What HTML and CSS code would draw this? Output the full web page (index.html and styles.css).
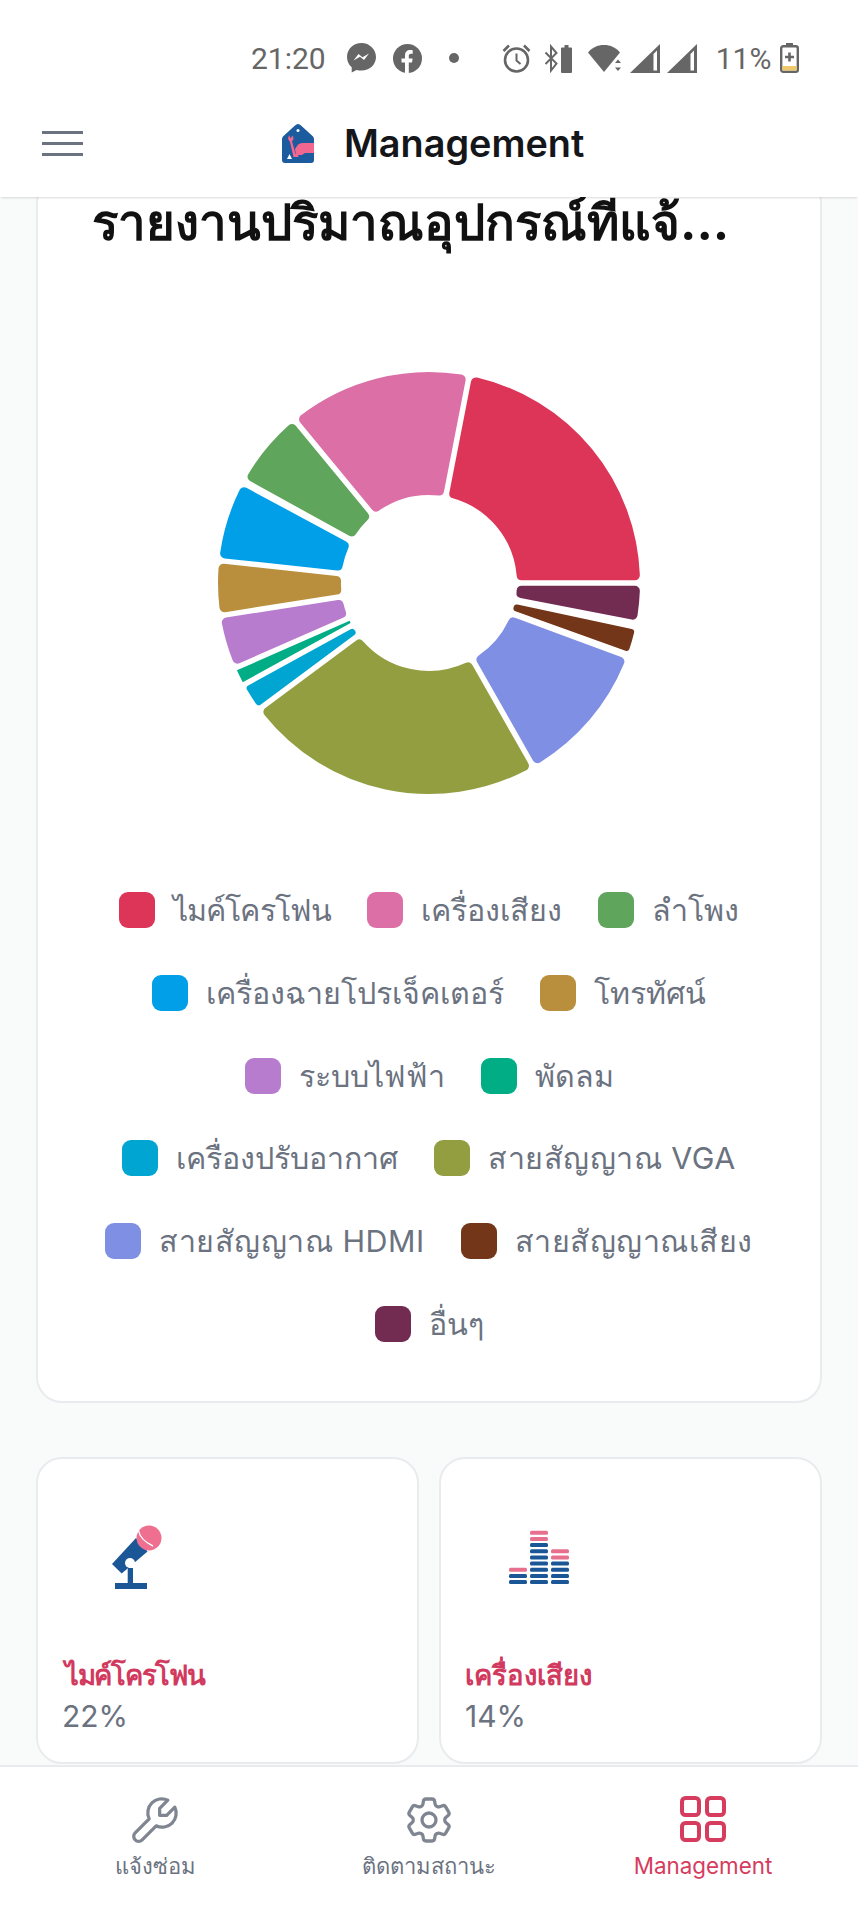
FILE: index.html
```html
<!DOCTYPE html>
<html lang="th">
<head>
    <meta charset="UTF-8">
    <meta name="viewport" content="width=device-width, initial-scale=1.0">
    <title>Management</title>
    <link rel="stylesheet" href="styles.css">
</head>
<body>
    <div class="status-bar">
        <span class="status-time">21:20</span>
        <svg class="ic-messenger" width="29" height="30" viewBox="0 0 29 30"><path d="M14.5 0C6.5 0 0 6 0 14c0 4.200 1.800 7.800 4.700 10.300V29.500l4.900-2.600c1.500.5 3.200.7 4.900.7 8 0 14.500-6 14.500-13.600S22.500 0 14.500 0z" fill="#666"/><path d="M6.500 17.500l5-6.500 4 3.200 6.500-3.700-5 6.500-4-3.200z" fill="#fff"/></svg>
        <svg class="ic-facebook" width="29" height="29" viewBox="0 0 29 29"><circle cx="14.500" cy="14.500" r="14.500" fill="#666"/><path d="M12 29V18.500H8.500v-4H12v-3c0-3.500 2.100-5.400 5.200-5.400 1.200 0 2.500.2 2.500.2v3.400H18c-1.700 0-2.200 1-2.200 2.100v2.700h3.800l-.6 4h-3.200V29z" fill="#fff"/></svg>
        <span class="status-dot"></span>
        <svg class="ic-alarm" width="29" height="30" viewBox="0 0 29 30" fill="none" stroke="#666"><circle cx="14.500" cy="17" r="11.500" stroke-width="2.600"/><path d="M14.500 10.500V17.500l4 3.500" stroke-width="2"/><path d="M1.500 8L7 2.500M27.500 8L22 2.500" stroke-width="2.600"/></svg>
        <svg class="ic-bluetooth" width="28" height="29" viewBox="0 0 28 29"><path d="M1.500 8.500l11 11-5.500 7V2.500l5.500 6.500-11 11" fill="none" stroke="#666" stroke-width="2"/><path d="M18 3.500h2.500V1h4v2.500H27a1 1 0 0 1 1 1V28a1 1 0 0 1-1 1h-9a1 1 0 0 1-1-1V4.500a1 1 0 0 1 1-1z" fill="#666"/></svg>
        <svg class="ic-wifi" width="34" height="28" viewBox="0 0 34 28"><path d="M0 8.500C4 3.500 9.500 1 16 1s12 2.500 16 7.500L16 28z" fill="#666"/><path d="M30 15.500l3 3.500h-6zM30 27l3-3.500h-6z" fill="#666"/></svg>
        <svg class="ic-signal" width="30" height="29" viewBox="0 0 30 29"><path d="M0 29L30 0v29z" fill="#666"/><path d="M23.500 26.500V10l3.500-3.500v20z" fill="#fff"/></svg>
        <svg class="ic-signal2" width="30" height="29" viewBox="0 0 30 29"><path d="M0 29L30 0v29z" fill="#666"/><path d="M23.500 26.500V10l3.500-3.500v20z" fill="#fff"/></svg>
        <span class="status-batt">11%</span>
        <svg class="ic-battery" width="19" height="30" viewBox="0 0 19 30"><path d="M6 0h7v3H6z" fill="#666"/><rect x="1.200" y="3.200" width="16.600" height="25.600" rx="2" fill="#fff" stroke="#666" stroke-width="2.400"/><path d="M2.400 23h14.200v4.600H2.400z" fill="#edc96c"/><path d="M8.200 9.500h2.600v3.200H14v2.600h-3.200v3.200H8.200v-3.200H5v-2.600h3.200z" fill="#666"/></svg>
    </div>

    <header class="topbar">
        <button class="menu-btn" aria-label="menu"><span></span><span></span><span></span></button>
        <div class="brand">
            <svg width="32" height="39" viewBox="0 0 32 39">
                <path d="M16 0c1 0 2 .5 3 1.500L30.500 12c1 1 1.500 2 1.500 3.500V36c0 2-1 3-3 3H3c-2 0-3-1-3-3V15.500C0 14 .5 13 1.500 12L13 1.500C14 .5 15 0 16 0z" fill="#1b5b9e"/>
                <circle cx="16" cy="6.500" r="1.500" fill="#fff"/>
                <path d="M32 19H21c-3 0-5 1-6 3l-2 3 1 6h6l3-2h9z" fill="#f3668f"/>
                <path d="M7 11l1.500 3L11 11.500l.5 4-1.500 1.500 3.500 13h2.500l.5 3h-5L8 18 6 15z" fill="#f3668f"/>
                <path d="M5 35l2.500-5 2.500 5z" fill="#fff"/>
            </svg>
            <span class="brand-name">Management</span>
        </div>
    </header>

    <main class="content">
        <section class="card chart-card">
            <h1 class="chart-title">รายงานปริมาณอุปกรณ์ที่แจ้...</h1>
            <svg id="donut" class="donut" width="440" height="440" viewBox="-220 -220 440 440"></svg>
            <div class="legend">
                <div class="legend-row">
                    <div class="legend-item"><i class="swatch c-red"></i><span class="tight">ไมค์โครโฟน</span></div>
                    <div class="legend-item"><i class="swatch c-pink"></i>เครื่องเสียง</div>
                    <div class="legend-item"><i class="swatch c-green"></i>ลำโพง</div>
                </div>
                <div class="legend-row">
                    <div class="legend-item"><i class="swatch c-blue"></i>เครื่องฉายโปรเจ็คเตอร์</div>
                    <div class="legend-item"><i class="swatch c-tan"></i>โทรทัศน์</div>
                </div>
                <div class="legend-row">
                    <div class="legend-item"><i class="swatch c-purple"></i>ระบบไฟฟ้า</div>
                    <div class="legend-item"><i class="swatch c-teal"></i>พัดลม</div>
                </div>
                <div class="legend-row">
                    <div class="legend-item"><i class="swatch c-cyan"></i>เครื่องปรับอากาศ</div>
                    <div class="legend-item"><i class="swatch c-olive"></i><span class="wide">สายสัญญาณ VGA</span></div>
                </div>
                <div class="legend-row">
                    <div class="legend-item"><i class="swatch c-peri"></i><span class="wide">สายสัญญาณ HDMI</span></div>
                    <div class="legend-item"><i class="swatch c-brown"></i><span class="wide">สายสัญญาณเสียง</span></div>
                </div>
                <div class="legend-row">
                    <div class="legend-item"><i class="swatch c-maroon"></i>อื่นๆ</div>
                </div>
            </div>
        </section>

        <div class="stat-grid">
            <section class="card stat-card">
                <svg class="stat-icon" width="110" height="100" viewBox="0 0 110 100">
                    <path d="M74 28L85.500 41.500 59.700 63.500 50 54z" fill="#1b5696"/>
                    <circle cx="68" cy="53" r="5" fill="#fff"/>
                    <path d="M65.700 58h5.300v15h-5.300zM53 73h32v6H53z" fill="#1b5696"/>
                    <circle cx="87" cy="28" r="12.500" fill="#ee6f8f"/>
                    <path d="M76.500 20.500c1 6 7 12 14.500 15.500" fill="none" stroke="#fff" stroke-width="1.400"/>
                </svg>
                <div class="stat-name"><span class="tight-lg">ไมค์โครโฟน</span></div>
                <div class="stat-value">22%</div>
            </section>
            <section class="card stat-card">
                <svg class="stat-icon" width="110" height="100" viewBox="0 0 110 100">
                    <g fill="#e8708f">
                        <rect x="65" y="20.700" width="18" height="4" rx="1.500"/>
                        <rect x="65" y="26.900" width="18" height="4" rx="1.500"/>
                        <rect x="86" y="39.200" width="18" height="4" rx="1.500"/>
                        <rect x="86" y="45.400" width="18" height="4" rx="1.500"/>
                        <rect x="44" y="57.700" width="18" height="4" rx="1.500"/>
                    </g>
                    <g fill="#1b5696">
                        <rect x="65" y="33" width="18" height="4" rx="1.500"/>
                        <rect x="65" y="39.200" width="18" height="4" rx="1.500"/>
                        <rect x="65" y="45.400" width="18" height="4" rx="1.500"/>
                        <rect x="65" y="51.500" width="18" height="4" rx="1.500"/>
                        <rect x="65" y="57.700" width="18" height="4" rx="1.500"/>
                        <rect x="65" y="63.900" width="18" height="4" rx="1.500"/>
                        <rect x="65" y="70" width="18" height="4" rx="1.500"/>
                        <rect x="86" y="51.500" width="18" height="4" rx="1.500"/>
                        <rect x="86" y="57.700" width="18" height="4" rx="1.500"/>
                        <rect x="86" y="63.900" width="18" height="4" rx="1.500"/>
                        <rect x="86" y="70" width="18" height="4" rx="1.500"/>
                        <rect x="44" y="63.900" width="18" height="4" rx="1.500"/>
                        <rect x="44" y="70" width="18" height="4" rx="1.500"/>
                    </g>
                </svg>
                <div class="stat-name">เครื่องเสียง</div>
                <div class="stat-value">14%</div>
            </section>
        </div>
    </main>

    <nav class="bottom-nav">
        <a class="nav-item">
            <svg class="nav-ic" width="56" height="56" viewBox="0 0 24 24" fill="none" stroke="currentColor" stroke-width="1.400" stroke-linecap="round" stroke-linejoin="round"><path transform="translate(24 0) scale(-1 1)" d="M7 10h3v-3l-3.500-3.500a6 6 0 0 1 8 8l6 6a2 2 0 0 1-3 3l-6-6a6 6 0 0 1-8-8l3.500 3.500"/></svg>
            <span>แจ้งซ่อม</span>
        </a>
        <a class="nav-item">
            <svg class="nav-ic" width="56" height="56" viewBox="0 0 24 24" fill="none" stroke="currentColor" stroke-width="1.400" stroke-linecap="round" stroke-linejoin="round"><path d="M9.594 3.940c.09-.542.56-.94 1.110-.94h2.593c.55 0 1.020.398 1.110.94l.213 1.281c.063.374.313.686.645.87.074.04.147.083.22.127.325.196.72.257 1.075.124l1.217-.456a1.125 1.125 0 0 1 1.370.49l1.296 2.247a1.125 1.125 0 0 1-.26 1.431l-1.003.827c-.293.241-.438.613-.43.992a7.723 7.723 0 0 1 0 .255c-.008.378.137.75.43.991l1.004.827c.424.35.534.955.26 1.430l-1.298 2.247a1.125 1.125 0 0 1-1.369.491l-1.217-.456c-.355-.133-.75-.072-1.076.124a6.470 6.470 0 0 1-.22.128c-.331.183-.581.495-.644.869l-.213 1.281c-.09.543-.56.94-1.110.94h-2.594c-.55 0-1.019-.398-1.110-.94l-.213-1.281c-.062-.374-.312-.686-.644-.87a6.520 6.520 0 0 1-.22-.127c-.325-.196-.72-.257-1.076-.124l-1.217.456a1.125 1.125 0 0 1-1.369-.49l-1.297-2.247a1.125 1.125 0 0 1 .26-1.431l1.004-.827c.292-.24.437-.613.43-.991a6.932 6.932 0 0 1 0-.255c.007-.38-.138-.751-.43-.992l-1.004-.827a1.125 1.125 0 0 1-.26-1.430l1.297-2.247a1.125 1.125 0 0 1 1.370-.491l1.216.456c.356.133.751.072 1.076-.124.072-.044.146-.086.22-.128.332-.183.582-.495.644-.869l.214-1.280z"/><circle cx="12" cy="12" r="3"/></svg>
            <span>ติดตามสถานะ</span>
        </a>
        <a class="nav-item active">
            <svg width="60" height="60" viewBox="0 0 60 60" fill="none" stroke="currentColor" stroke-width="4"><rect x="9" y="8" width="17" height="17" rx="3.500"/><rect x="34" y="8" width="17" height="17" rx="3.500"/><rect x="9" y="33" width="17" height="17" rx="3.500"/><rect x="34" y="33" width="17" height="17" rx="3.500"/></svg>
            <span>Management</span>
        </a>
    </nav>

    <script src="chart.js"></script>
</body>
</html>
```

FILE: styles.css
```css
* {
    box-sizing: border-box;
}
body {
    margin: 0;
    height: 1907px;
    display: flex;
    flex-direction: column;
    overflow: hidden;
    background-color: #f9fafa;
    font-family: Inter, "Noto Sans", sans-serif;
    color: #6b7280;
}

/* status bar */
.status-bar {
    height: 100px;
    flex: none;
    display: flex;
    align-items: center;
    padding: 16px 0 0 251px;
    background-color: #fff;
    font-family: Roboto, sans-serif;
    font-size: 30px;
    color: #666;
}
.status-bar svg {
    flex: none;
}
.ic-messenger { margin-left: 21px; }
.ic-facebook { margin-left: 17px; }
.status-dot {
    width: 10px;
    height: 10px;
    margin-left: 27px;
    border-radius: 50%;
    background-color: #666;
}
.ic-alarm { margin-left: 43px; }
.ic-bluetooth { margin-left: 13px; }
.ic-wifi { margin-left: 16px; }
.ic-signal { margin-left: 8px; }
.ic-signal2 { margin-left: 7px; }
.status-batt { margin-left: 19px; }
.ic-battery { margin-left: 9px; }

/* top bar */
.topbar {
    height: 97px;
    flex: none;
    position: relative;
    z-index: 2;
    display: flex;
    align-items: center;
    padding-left: 42px;
    background-color: #fff;
    box-shadow: 0 2px 2px -1px rgba(0, 0, 0, 0.14);
}
.menu-btn {
    width: 41px;
    display: flex;
    flex-direction: column;
    gap: 8px;
    padding: 0;
    border: none;
    background: none;
    margin-top: -10px;
}
.menu-btn span {
    height: 3px;
    background-color: #6b7280;
}
.brand {
    display: flex;
    align-items: center;
    gap: 30px;
    margin-left: 199px;
    margin-top: -11px;
}
.brand-name {
    font-size: 37.8px;
    font-weight: 600;
    color: #14161a;
}

/* scrolled content */
.content {
    flex: 1;
    min-height: 0;
    overflow: hidden;
    padding: 0 36px;
}
.card {
    background-color: #fff;
    border: 2px solid #e9ebee;
    border-radius: 26px;
}
.chart-card {
    margin-top: -20px;
    padding: 14px 0 36px;
}
.chart-title {
    height: 58px;
    margin: 0 0 0 54px;
    font-size: 49.2px;
    font-weight: 700;
    line-height: 58px;
    color: #111;
    white-space: nowrap;
}
.donut {
    display: block;
    margin: 112px auto 0;
}
.legend {
    margin-top: 66px;
}
.legend-row {
    height: 82.7px;
    display: flex;
    align-items: center;
    justify-content: center;
    gap: 36px;
}
.legend-item {
    display: flex;
    align-items: center;
    gap: 18px;
    font-size: 30.4px;
    white-space: nowrap;
}
.tight {
    letter-spacing: -0.9px;
}
.wide {
    letter-spacing: 0.5px;
}
.swatch {
    width: 36px;
    height: 36px;
    border-radius: 9px;
}
.c-red { background-color: #dc3558; }
.c-pink { background-color: #dc70a6; }
.c-green { background-color: #60a55c; }
.c-blue { background-color: #009fe8; }
.c-tan { background-color: #b98f3d; }
.c-purple { background-color: #b87ccf; }
.c-teal { background-color: #00ad85; }
.c-cyan { background-color: #00a5d1; }
.c-olive { background-color: #939e41; }
.c-peri { background-color: #7f8fe3; }
.c-brown { background-color: #733619; }
.c-maroon { background-color: #722c51; }

/* stat cards */
.stat-grid {
    display: grid;
    grid-template-columns: 1fr 1fr;
    gap: 20px;
    margin-top: 54px;
}
.stat-card {
    height: 307px;
    padding: 51px 24px 0;
}
.stat-icon {
    display: block;
}
.stat-name {
    margin-top: 45px;
    font-size: 27.5px;
    font-weight: 700;
    line-height: 40px;
    color: #d13a5e;
}
.tight-lg {
    display: inline-block;
    margin-left: 3px;
    letter-spacing: -1.3px;
}
.stat-value {
    margin-top: 1px;
    font-size: 30px;
    line-height: 40px;
}

/* bottom nav */
.bottom-nav {
    height: 142px;
    flex: none;
    position: relative;
    z-index: 2;
    display: grid;
    grid-template-columns: repeat(3, 1fr);
    padding: 23px 18px 0;
    background-color: #fff;
    border-top: 2px solid #e9ebee;
}
.nav-item {
    display: flex;
    flex-direction: column;
    align-items: center;
    font-size: 22px;
    line-height: 32px;
    color: #6b7280;
}
.nav-ic {
    margin: 2px;
    color: #7f8591;
}
.nav-item.active {
    font-size: 22.4px;
    color: #d63c5e;
}
```

FILE: chart.js
```js
// donut drawn from the angle table, clockwise from 12 o'clock
var segments = [
    { from: 11, to: 90, color: '#dc3558' },
    { from: 90, to: 101, color: '#722c51' },
    { from: 102, to: 109.8, color: '#733619' },
    { from: 110.3, to: 150.4, color: '#7f8fe3' },
    { from: 150.4, to: 233.4, color: '#939e41' },
    { from: 233.4, to: 241.2, color: '#00a5d1' },
    { from: 241.2, to: 246.3, color: '#00ad85' },
    { from: 246.3, to: 261.1, color: '#b87ccf' },
    { from: 261.1, to: 276.1, color: '#b98f3d' },
    { from: 276.1, to: 298.3, color: '#009fe8' },
    { from: 298.9, to: 320.5, color: '#60a55c' },
    { from: 320.5, to: 371, color: '#dc70a6' }
];
var outer = 211, inner = 88, gap = 5.5, corner = 5;

function point(radius, angle) {
    var a = angle * Math.PI / 180;
    return (radius * Math.sin(a)).toFixed(2) + ' ' + (-radius * Math.cos(a)).toFixed(2);
}

function segmentPath(seg, r) {
    var ro = outer - r, ri = inner + r, d = gap / 2 + r;
    var shiftO = Math.asin(d / ro) * 180 / Math.PI;
    var shiftI = Math.asin(d / ri) * 180 / Math.PI;
    var large = seg.to - seg.from - 2 * shiftO > 180 ? 1 : 0;
    return 'M' + point(ro, seg.from + shiftO) +
        ' A' + ro + ' ' + ro + ' 0 ' + large + ' 1 ' + point(ro, seg.to - shiftO) +
        ' L' + point(ri, seg.to - shiftI) +
        ' A' + ri + ' ' + ri + ' 0 0 0 ' + point(ri, seg.from + shiftI) + ' Z';
}

var svg = document.getElementById('donut');
segments.forEach(function (seg) {
    // thin slices can't hold the full corner radius
    var s = Math.sin((seg.to - seg.from) / 2 * Math.PI / 180);
    var r = Math.min(corner, 0.9 * (inner * s - gap / 2) / (1 - s));
    if (r < 2) r = 0;
    var path = document.createElementNS('http://www.w3.org/2000/svg', 'path');
    path.setAttribute('d', segmentPath(seg, r));
    path.setAttribute('fill', seg.color);
    path.setAttribute('stroke', seg.color);
    path.setAttribute('stroke-width', 2 * r);
    path.setAttribute('stroke-linejoin', 'round');
    svg.appendChild(path);
});
```
